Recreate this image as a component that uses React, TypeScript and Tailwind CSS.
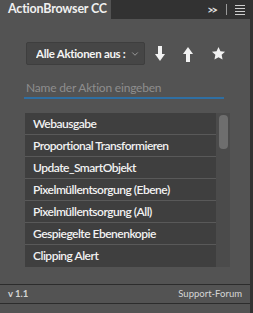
import { ChevronDown } from 'lucide-react';

const actions = [
  'Webausgabe',
  'Proportional Transformieren',
  'Update_SmartObjekt',
  'Pixelmüllentsorgung (Ebene)',
  'Pixelmüllentsorgung (All)',
  'Gespiegelte Ebenenkopie',
  'Clipping Alert',
];

function ArrowDown() {
  return (
    <svg width="10" height="16" viewBox="0 0 10 16" fill="#f2f2f2">
      <rect x="3" y="0" width="4" height="10" />
      <polygon points="0,8 10,8 5,15" />
    </svg>
  );
}

function ArrowUp() {
  return (
    <svg width="10" height="16" viewBox="0 0 10 16" fill="#f2f2f2">
      <polygon points="0,8 10,8 5,1" />
      <rect x="3" y="6" width="4" height="10" />
    </svg>
  );
}

function Star() {
  return (
    <svg width="15" height="15" viewBox="0 0 24 24" fill="#f2f2f2">
      <polygon points="12,1.5 15.1,8.3 22.5,9.1 17,14.1 18.5,21.5 12,17.8 5.5,21.5 7,14.1 1.5,9.1 8.9,8.3" />
    </svg>
  );
}

export default function App() {
  return (
    <div className="w-[253px] h-[313px] bg-[#323232] flex flex-col font-['Lato',sans-serif] overflow-hidden">
      {/* Tab bar */}
      <div className="h-[19px] flex items-end">
        <div className="h-[19px] w-[111px] bg-[#535353] pl-[8px] flex items-center text-[12.5px] font-bold text-[#f0f0f0] whitespace-nowrap tracking-[-0.2px]">
          ActionBrowser CC
        </div>
        <div className="flex-1 h-full flex items-center justify-end pr-[8px] gap-[6px]">
          <span className="text-[11px] font-bold text-[#e0e0e0] leading-none tracking-[-2px]">&gt;&gt;</span>
          <span className="w-px h-[11px] bg-[#9a9a9a] ml-[4px]" />
          <span className="flex flex-col gap-[2px] ml-[2px]">
            <span className="w-[10px] h-px bg-[#cfcfcf]" />
            <span className="w-[10px] h-px bg-[#cfcfcf]" />
            <span className="w-[10px] h-px bg-[#cfcfcf]" />
            <span className="w-[10px] h-px bg-[#cfcfcf]" />
          </span>
        </div>
      </div>

      {/* Panel body */}
      <div className="flex-1 bg-[#535353] mr-[3px] flex flex-col">
        <div className="flex items-center pl-[26px] pt-[23px]">
          <div className="w-[119px] h-[23px] bg-[#464646] border border-[#3e3e3e] rounded-[2px] flex items-center pl-[9px] pr-[4px]">
            <span className="text-[11.5px] font-bold text-[#f4f4f4] whitespace-nowrap overflow-hidden flex-1 tracking-[-0.3px]">
              Alle Aktionen aus :
            </span>
            <ChevronDown size={10} color="#aaaaaa" strokeWidth={2} />
          </div>
          <div className="flex items-center ml-[10px] gap-[18px]">
            <ArrowDown />
            <ArrowUp />
            <Star />
          </div>
        </div>

        <div className="ml-[24px] mr-[26px] mt-[14px] h-[20px] border-b-2 border-[#2f6fa3] flex items-center pl-[2px]">
          <span className="text-[12px] text-[#8e8e8e] tracking-[-0.2px]">Name der Aktion eingeben</span>
        </div>

        <div className="ml-[25px] mr-[20px] mt-[14px] flex bg-[#4b4b4b]">
          <div className="flex-1 flex flex-col">
            {actions.map((a, i) => (
              <div
                key={a}
                className={`h-[22px] bg-[#3f3f3f] flex items-center pl-[8px] text-[12px] font-semibold text-[#f2f2f2] whitespace-nowrap tracking-[-0.5px] ${
                  i < actions.length - 1 ? 'border-b border-[#595959]' : ''
                }`}
              >
                {a}
              </div>
            ))}
          </div>
          <div className="w-[14px] flex justify-center pt-[2px]">
            <div className="w-[9px] h-[34px] rounded-[4px] bg-[#6e6e6e]" />
          </div>
        </div>

        <div className="mt-auto h-[20px] border-t border-[#2c2c2c] border-b flex items-center justify-between px-[8px] mb-[9px]">
          <span className="text-[9.5px] font-bold text-[#d6d6d6]">v 1.1</span>
          <span className="text-[9.5px] text-[#d6d6d6]">Support-Forum</span>
        </div>
      </div>
    </div>
  );
}
